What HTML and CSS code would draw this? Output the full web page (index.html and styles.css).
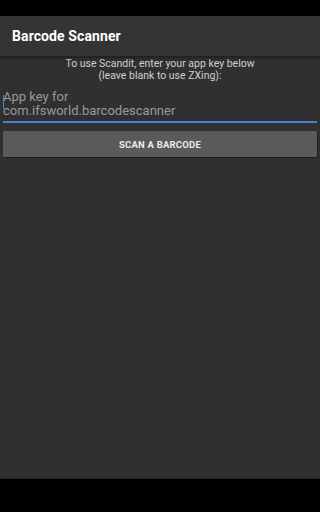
FILE: index.html
```html
<!DOCTYPE html>
<html>
<head>
<meta charset="utf-8">
<meta name="viewport" content="width=288">
<link rel="stylesheet" href="styles.css">
</head>
<body>
<div class="screen">
  <div class="status"></div>
  <header class="appbar"><h1 class="title">Barcode Scanner</h1></header>
  <main class="content">
    <p class="intro">To use Scandit, enter your app key below<br>(leave blank to use ZXing):</p>
    <div class="field">
      <span class="cursor"></span>
      <div class="hint">App key for<br>com.ifsworld.barcodescanner</div>
    </div>
    <button class="scan">SCAN A BARCODE</button>
  </main>
  <div class="navbar"></div>
</div>
</body>
</html>
```
FILE: styles.css
```css
* { box-sizing: border-box; }
html, body { margin: 0; padding: 0; height: 100%; }
body { background: #303030; font-family: Roboto, "Noto Sans", sans-serif; }
.screen { width: 100%; height: 100vh; display: flex; flex-direction: column; background: #303030; }
.status { height: 16px; background: #000; flex: none; }
.appbar { height: 40px; flex: none; background: #343434; display: flex; align-items: center; padding-left: 12px; box-shadow: 0 2px 3px rgba(0,0,0,0.35); position: relative; z-index: 1; }
.title { margin: 0; font-size: 14px; font-weight: 700; color: #fff; letter-spacing: 0.1px; }
.content { flex: 1; padding: 2px 3px 0; display: flex; flex-direction: column; }
.intro { margin: 0; text-align: center; font-size: 10.5px; line-height: 11.5px; color: #cfcfcf; }
.field { position: relative; margin-top: 8.5px; padding-bottom: 3.5px; border-bottom: 2px solid #4a7fd6; }
.hint { font-size: 13px; line-height: 14px; color: #9a9a9a; }
.cursor { position: absolute; left: 0; top: 5px; width: 1px; height: 14px; background: #4a7fd6; }
.scan { margin-top: 8px; height: 26px; border: none; border-radius: 1px; background: #5a5a5a; color: #ececec; font-family: Roboto, sans-serif; font-weight: 700; font-size: 9.5px; letter-spacing: 0.2px; padding: 0; box-shadow: 1px 1px 1px rgba(0,0,0,0.4); }
.navbar { height: 34px; flex: none; background: #000; border-top: 1px solid #222; }
```
